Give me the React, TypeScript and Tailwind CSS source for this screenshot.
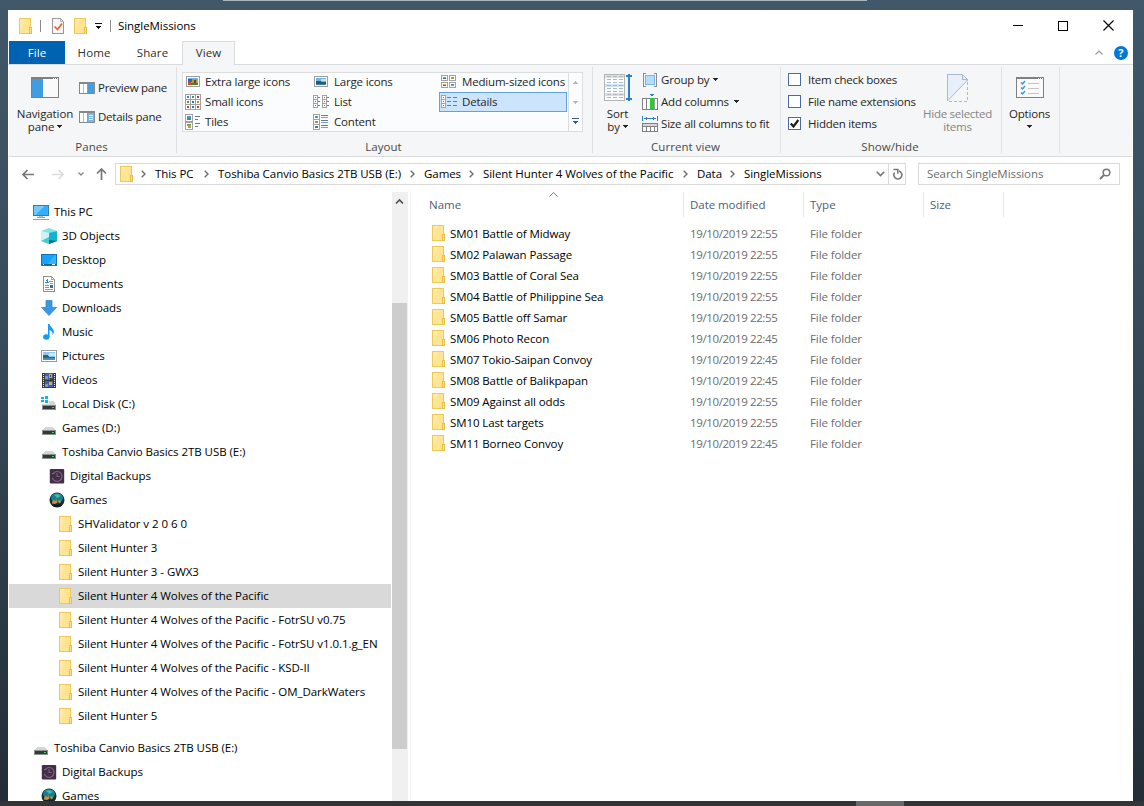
import { useState } from 'react';
import type { ReactNode } from 'react';

type IconName =
  | 'pc' | 'cube' | 'desktop' | 'documents' | 'downloads' | 'music' | 'pictures' | 'videos'
  | 'system' | 'drive' | 'backup' | 'game' | 'folder';

const TREE: { label: string; icon: IconName; level: number; gap?: boolean }[] = [
  { label: 'This PC', icon: 'pc', level: 0 },
  { label: '3D Objects', icon: 'cube', level: 1 },
  { label: 'Desktop', icon: 'desktop', level: 1 },
  { label: 'Documents', icon: 'documents', level: 1 },
  { label: 'Downloads', icon: 'downloads', level: 1 },
  { label: 'Music', icon: 'music', level: 1 },
  { label: 'Pictures', icon: 'pictures', level: 1 },
  { label: 'Videos', icon: 'videos', level: 1 },
  { label: 'Local Disk (C:)', icon: 'system', level: 1 },
  { label: 'Games (D:)', icon: 'drive', level: 1 },
  { label: 'Toshiba Canvio Basics 2TB USB (E:)', icon: 'drive', level: 1 },
  { label: 'Digital Backups', icon: 'backup', level: 2 },
  { label: 'Games', icon: 'game', level: 2 },
  { label: 'SHValidator v 2 0 6 0', icon: 'folder', level: 3 },
  { label: 'Silent Hunter 3', icon: 'folder', level: 3 },
  { label: 'Silent Hunter 3 - GWX3', icon: 'folder', level: 3 },
  { label: 'Silent Hunter 4 Wolves of the Pacific', icon: 'folder', level: 3 },
  { label: 'Silent Hunter 4 Wolves of the Pacific - FotrSU v0.75', icon: 'folder', level: 3 },
  { label: 'Silent Hunter 4 Wolves of the Pacific - FotrSU v1.0.1.g_EN', icon: 'folder', level: 3 },
  { label: 'Silent Hunter 4 Wolves of the Pacific - KSD-II', icon: 'folder', level: 3 },
  { label: 'Silent Hunter 4 Wolves of the Pacific - OM_DarkWaters', icon: 'folder', level: 3 },
  { label: 'Silent Hunter 5', icon: 'folder', level: 3 },
  { label: 'Toshiba Canvio Basics 2TB USB (E:)', icon: 'drive', level: 0, gap: true },
  { label: 'Digital Backups', icon: 'backup', level: 1 },
  { label: 'Games', icon: 'game', level: 1 },
];

const INDENT = ['pl-[24px]', 'pl-[32px]', 'pl-[40px]', 'pl-[48px]'];

const FILES = [
  { name: 'SM01 Battle of Midway', date: '19/10/2019 22:55' },
  { name: 'SM02 Palawan Passage', date: '19/10/2019 22:55' },
  { name: 'SM03 Battle of Coral Sea', date: '19/10/2019 22:55' },
  { name: 'SM04 Battle of Philippine Sea', date: '19/10/2019 22:55' },
  { name: 'SM05 Battle off Samar', date: '19/10/2019 22:55' },
  { name: 'SM06 Photo Recon', date: '19/10/2019 22:45' },
  { name: 'SM07 Tokio-Saipan Convoy', date: '19/10/2019 22:45' },
  { name: 'SM08 Battle of Balikpapan', date: '19/10/2019 22:45' },
  { name: 'SM09 Against all odds', date: '19/10/2019 22:55' },
  { name: 'SM10 Last targets', date: '19/10/2019 22:55' },
  { name: 'SM11 Borneo Convoy', date: '19/10/2019 22:45' },
];

const CRUMBS = [
  { label: 'This PC', width: 'w-[63px]' },
  { label: 'Toshiba Canvio Basics 2TB USB (E:)', width: 'w-[206px]' },
  { label: 'Games', width: 'w-[59px]' },
  { label: 'Silent Hunter 4 Wolves of the Pacific', width: 'w-[214px]' },
  { label: 'Data', width: 'w-[47px]' },
  { label: 'SingleMissions', width: 'w-[100px]' },
];

function Svg({ w = 16, h = 16, className = '', crisp = true, children }: { w?: number; h?: number; className?: string; crisp?: boolean; children: ReactNode }) {
  return (
    <svg width={w} height={h} viewBox={`0 0 ${w} ${h}`} shapeRendering={crisp ? 'crispEdges' : 'auto'} fill="none" className={`shrink-0 ${className}`}>
      {children}
    </svg>
  );
}

function Folder({ className = '' }: { className?: string }) {
  return (
    <Svg w={14} className={className}>
      <path d="M.5.5h11v15H.5z" fill="#ffe493" stroke="#efc958" />
      <path d="M1 1h5L1 14z" fill="#ffe9a6" />
      <path d="M10.5 9.5h2v6h-2z" fill="#ffe493" stroke="#e8bd48" />
    </Svg>
  );
}

function Drive({ system = false }: { system?: boolean }) {
  return (
    <Svg>
      {system && <path d="M0 1h3v2H0zM4 0h3v3H4zM0 4h3v2H0zM4 4h3v3H4z" fill="#0bb4f0" />}
      <path d={system ? 'M8 5h5l2 4H1V8h7z' : 'M4 7h8l3 4H1z'} fill="#d4d5d6" />
      <g transform={system ? 'translate(0 -1)' : undefined}>
        <path d="M1 10h14v5H1z" fill="#8e9192" />
        <path d="M2 11h12v3H2z" fill="#343838" />
        <path d="M11 12h2v1h-2z" fill="#2be04c" />
      </g>
    </Svg>
  );
}

function TreeIcon({ name }: { name: IconName }) {
  switch (name) {
    case 'pc':
      return (
        <Svg>
          <path d="M.5 1.5h15v10H.5z" fill="#35b0f8" stroke="#2c7fb5" />
          <path d="M1 2h10L3 11H1z" fill="#75cafa" />
          <path d="M6 12h4v1H6z" fill="#b8c3cc" />
          <path d="M4 13h8v1H4zM0 15h16v1H0z" fill="#8fa2b4" />
        </Svg>
      );
    case 'cube':
      return (
        <Svg crisp={false}>
          <path d="M0 3l8-3 8 3-8 3z" fill="#7fe3e8" />
          <path d="M0 3l8 2v11l-8-3z" fill="#cdf3f3" />
          <path d="M0 13l8-4v7z" fill="#43cbd3" />
          <path d="M8 5l8-2v10l-8 3z" fill="#14b2cf" />
          <path d="M8 12l8 1-8 3z" fill="#056b90" />
        </Svg>
      );
    case 'desktop':
      return (
        <Svg>
          <path d="M.5 2.5h15v11H.5z" fill="#17a3f9" stroke="#1277b4" />
          <path d="M7 12L14 3h1v9z" fill="#37b3fc" />
          <path d="M1 12h14v1H1z" fill="#0b65a4" />
          <path d="M2 12h1v1H2zM11 12h3v1h-3z" fill="#fff" />
        </Svg>
      );
    case 'documents':
      return (
        <Svg>
          <path d="M2.5.5h8l3 3v12h-11z" fill="#fff" stroke="#909090" />
          <path d="M10.5.5v3h3" stroke="#a5a5a5" />
          <path d="M6 3h1v4H6zM5 4h1v1H5zM4 6h4v1H4z" fill="#2f8ccc" />
          <path d="M8 5.5h4M9 7.5h3M4 9.5h4M4 11.5h4" stroke="#4a9fd3" />
          <path d="M9 9h3v3H9z" fill="#3d6f91" />
          <path d="M4 13.5h8" stroke="#999" />
        </Svg>
      );
    case 'downloads':
      return (
        <Svg crisp={false}>
          <path d="M5 .5h6v7h4.5L8 15.5.5 7.5H5z" fill="#3997e8" stroke="#2a82cc" strokeWidth=".7" />
        </Svg>
      );
    case 'music':
      return (
        <Svg crisp={false}>
          <ellipse cx="5.3" cy="13" rx="3.2" ry="2.7" fill="#129cf0" />
          <path d="M7 0h1.500c.3 2.800 4.800 4.200 4.300 8.500-.2 1-.7 1.600-1.300 2.500.4-3-.8-4.300-3-5v7H7z" fill="#129cf0" />
        </Svg>
      );
    case 'pictures':
      return (
        <Svg>
          <path d="M.5 2.5h15v11H.5z" fill="#fff" stroke="#9a9a9a" />
          <path d="M2 4h12v8H2z" fill="#8ecaf2" />
          <path d="M8 5h6v3H8z" fill="#c9e7f8" />
          <path d="M2 7h4l3 2h5v1H2z" fill="#2f6b56" />
          <path d="M2 10h12v2H2z" fill="#4f8db8" />
        </Svg>
      );
    case 'videos':
      return (
        <Svg>
          <path d="M1 1h14v15H1z" fill="#3a3a3a" />
          <path d="M2.500 2v14M13.500 2v14" stroke="#e8e8e8" strokeDasharray="1 1" />
          <path d="M4 1h8v7H4zM4 9h8v6H4z" fill="#3f62b8" />
          <path d="M8 2h3v4H8zM8 10h3v3H8z" fill="#d3b235" />
          <path d="M4 4h3v3H4zM4 12h3v3H4z" fill="#7698d9" />
          <path d="M9 3h1v2H9zM9 6h3v2H9z" fill="#504124" />
        </Svg>
      );
    case 'system':
      return <Drive system />;
    case 'drive':
      return <Drive />;
    case 'backup':
      return (
        <Svg crisp={false}>
          <rect x=".8" y="1" width="14.4" height="14.4" rx="1" fill="#452f48" />
          <path d="M4 5.500A5 5 0 1 1 3.300 10" stroke="#7c6680" strokeWidth="1.1" />
          <path d="M8 5v3.500h2.500M3 5.500h2.500" stroke="#7c6680" />
        </Svg>
      );
    case 'game':
      return (
        <Svg crisp={false}>
          <circle cx="8" cy="8" r="7.5" fill="#172f38" />
          <ellipse cx="8" cy="6" rx="6" ry="4.8" fill="#1b7f8b" />
          <path d="M5 2.500c2-1 5-.6 7 1.500L8 6z" fill="#45b5ae" />
          <path d="M3 10l1.500-2 2 1 1-2 .5 4-2 1-3-.5zM9 9l2-1 1 2-1.500 1.500z" fill="#d78a2e" />
          <path d="M3 12.500h10l-2 2.500H5z" fill="#111a20" />
        </Svg>
      );
    default:
      return <Folder className="ml-[2px]" />;
  }
}

function Caret({ className = '' }: { className?: string }) {
  return (
    <Svg w={5} h={3} className={`inline-block align-middle ${className}`}>
      <path d="M0 0h5v1H0zM1 1h3v1H1zM2 2h1v1H2z" fill="#262626" />
    </Svg>
  );
}

function Crumb() {
  return (
    <Svg w={5} h={8} crisp={false}>
      <path d="M.7.7L4 4 .7 7.3" stroke="#6e6e6e" strokeWidth="1.4" />
    </Svg>
  );
}

function Group({ label, width, children }: { label: string; width: string; children: ReactNode }) {
  return (
    <section className={`mt-[2px] flex h-[86px] shrink-0 flex-col border-r border-[#e0e1e3] ${width}`}>
      <div className="flex h-[73px] shrink-0">{children}</div>
      <div className="h-[13px] pr-[2px] text-center leading-[13px] tracking-[0.05px] text-[#4a4a4a]">{label}</div>
    </section>
  );
}

function PaneIcon({ details = false }: { details?: boolean }) {
  return (
    <Svg h={12}>
      <path d="M.5.5h15v11H.5z" fill="#fff" stroke="#85888c" />
      <path d="M0 0h16v2H0z" fill="#85888c" />
      <path d="M4.500 2v9" stroke="#bcbec0" />
      <path d="M9 2h6v9H9z" fill={details ? '#74b6e8' : '#439de0'} />
      <path d="M8.500 2v9" stroke="#999" />
      {details && <path d="M10 4.500h4M10 6.500h4M10 8.500h4" stroke="#eaf6ff" />}
    </Svg>
  );
}

function Thumb({ x, y, a, b }: { x: number; y: number; a: string; b: string }) {
  return (
    <g transform={`translate(${x} ${y})`}>
      <path d="M.5.5h6v5h-6z" fill="#fff" stroke="#a2a2a2" />
      <path d="M2 2h3v1H2z" fill={a} />
      <path d="M2 3h3v1H2z" fill={b} />
    </g>
  );
}

function LayoutIcon({ name }: { name: string }) {
  if (name === 'Extra large icons' || name === 'Large icons') {
    const large = name === 'Large icons';
    return (
      <Svg>
        <path d="M1.500 2.500h13v10h-13z" fill="#fff" stroke="#9d9d9d" />
        <path d="M3 4h10v7H3z" fill="#6eb5ee" />
        {large ? (
          <>
            <path d="M8 5h5v2H8z" fill="#c5e2f4" />
            <path d="M3 7h3l3 1h4v2H3z" fill="#2d5e57" />
            <path d="M3 10h10v1H3z" fill="#3d7db5" />
          </>
        ) : (
          <>
            <path d="M3 5h4v3H3z" fill="#2a67c8" />
            <path d="M7 5h5v5H7z" fill="#b69a2d" />
            <path d="M9 6h2v3H9z" fill="#5d4a2c" />
            <path d="M3 8h3v3H3z" fill="#cc4c31" />
            <path d="M6 9h7v2H6z" fill="#3f7e3c" />
          </>
        )}
      </Svg>
    );
  }
  if (name === 'Small icons') {
    return (
      <Svg>
        <path d="M.5.5h15v15H.5zM5.500 0v16M10.500 0v16M0 5.500h16M0 10.500h16" stroke="#a2a2a2" fill="#fff" />
        <path d="M2 2h2v2H2z" fill="#3f84c4" /><path d="M7 2h2v2H7z" fill="#57895a" /><path d="M12 2h2v2h-2z" fill="#b8442f" />
        <path d="M2 7h2v2H2z" fill="#5a8c46" /><path d="M7 7h2v2H7z" fill="#3471b4" /><path d="M12 7h2v2h-2z" fill="#bd8b2f" />
        <path d="M2 12h2v2H2z" fill="#b8442f" /><path d="M7 12h2v2H7z" fill="#3471b4" /><path d="M12 12h2v2h-2z" fill="#b8442f" />
      </Svg>
    );
  }
  if (name === 'Medium-sized icons') {
    return (
      <Svg>
        <Thumb x={0} y={1} a="#6bacdf" b="#346b60" />
        <Thumb x={8} y={1} a="#5ca2dd" b="#b59a37" />
        <Thumb x={0} y={8} a="#e0a12e" b="#c43e26" />
        <Thumb x={8} y={8} a="#3d84c5" b="#b6a03c" />
      </Svg>
    );
  }
  if (name === 'List') {
    return (
      <Svg>
        {[0, 9].map((x) => (
          <g key={x} transform={`translate(${x} 1)`}>
            <path d="M.5.5h4v12h-4zM0 4.500h5M0 8.500h5" stroke="#a2a2a2" fill="#fff" />
            <path d="M2 2h1v1H2z" fill="#357fc5" /><path d="M2 6h1v1H2z" fill="#357fc5" /><path d="M2 10h1v1H2z" fill="#c4442d" />
            <path d="M5 2.500h2M5 6.500h2M5 10.500h2" stroke="#777" />
          </g>
        ))}
      </Svg>
    );
  }
  if (name === 'Details') {
    return (
      <Svg w={17}>
        <path d="M.5 1.500h4v12h-4zM0 5.500h5M0 9.500h5" stroke="#a2a2a2" fill="#fff" />
        <path d="M2 3h1v1H2z" fill="#357fc5" /><path d="M2 7h1v1H2z" fill="#357fc5" /><path d="M2 11h1v1H2z" fill="#c4442d" />
        <path d="M6 3.500h4M12 3.500h4M6 7.500h4M12 7.500h4M6 11.500h4M12 11.500h4" stroke="#737b86" />
      </Svg>
    );
  }
  if (name === 'Content') {
    return (
      <Svg>
        <path d="M.5.5h6v15h-6zM0 5.500h7M0 10.500h7" stroke="#a2a2a2" fill="#fff" />
        <path d="M2 2h3v2H2z" fill="#5a93b5" /><path d="M2 7h3v2H2z" fill="#b28b38" /><path d="M2 12h3v2H2z" fill="#3e78a5" />
        <path d="M8 1.500h7M8 6.500h7M8 11.500h7" stroke="#777" />
        <path d="M8 3.500h7M8 8.500h7M8 13.500h7" stroke="#6ba3e8" />
      </Svg>
    );
  }
  return (
    <Svg>
      <path d="M.5.5h7v7h-7zM.5 8.500h7v7h-7z" stroke="#a2a2a2" fill="#fff" />
      <path d="M2 2h4v2H2z" fill="#4b96d8" /><path d="M2 4h4v2H2z" fill="#4d8580" />
      <path d="M2 10h4v2H2z" fill="#6aa14e" /><path d="M3 11h3v3H3z" fill="#c29a4e" />
      <path d="M10 2.500h5M10 5.500h3M10 9.500h5M10 12.500h3" stroke="#777" />
    </Svg>
  );
}

const LAYOUTS = [
  ['Extra large icons', 'Small icons', 'Tiles'],
  ['Large icons', 'List', 'Content'],
  ['Medium-sized icons', 'Details'],
];
const LAYOUT_WIDTHS = ['w-[128px]', 'w-[128px]', 'w-[129px]'];

function TitleBar() {
  return (
    <header className="flex h-[31px] shrink-0 items-center pl-[11px]">
      <Folder />
      <div className="ml-[7px] h-[12px] w-px bg-[#8b8b8b]" />
      <Svg w={12} className="ml-[11px] mt-px">
        <path d="M.5.5h8l3 3v12H.5z" fill="#f7f7f7" stroke="#999" />
        <path d="M8.500.5v3h3" stroke="#b5b5b5" />
        <path d="M2.500 8.500l3 3 4.500-6" stroke="#eb6029" strokeWidth="1.7" shapeRendering="auto" />
      </Svg>
      <Folder className="ml-[10px] mt-px" />
      <Svg w={7} h={6} className="ml-[7px] mt-px">
        <path d="M0 0h7v1H0zM1 3h5v1H1zM2 4h3v1H2zM3 5h1v1H3z" fill="#111" />
      </Svg>
      <div className="ml-[8px] h-[12px] w-px bg-[#8b8b8b]" />
      <span className="ml-[7px] tracking-[-0.05px] text-black">SingleMissions</span>
      <div className="ml-auto mr-[19px] flex items-center gap-[35px]">
        <Svg w={10} h={11}><path d="M0 5h10v1H0z" fill="#000" /></Svg>
        <Svg w={10} h={10}><path d="M.5.5h9v9h-9z" stroke="#000" /></Svg>
        <Svg w={11} h={11} crisp={false}><path d="M.5.5l10 10M10.500.5l-10 10" stroke="#000" strokeWidth="1.1" /></Svg>
      </div>
    </header>
  );
}

function Tabs() {
  return (
    <nav className="flex h-[24px] shrink-0 border-b border-[#dadbdc] tracking-[0.1px] text-[#303030]">
      <div className="ml-px w-[56px] bg-[#0063b1] text-center leading-[24px] text-white">File</div>
      <div className="w-[58px] text-center leading-[24px]">Home</div>
      <div className="w-[59px] text-center leading-[24px]">Share</div>
      <div className="h-[24px] w-[53px] border border-b-0 border-[#dadbdc] bg-[#f5f6f7] text-center leading-[22px]">View</div>
      <div className="ml-auto mr-[5px] flex items-center gap-[11px]">
        <Svg w={8} h={5} crisp={false}><path d="M.5 4.500L4 1l3.500 3.500" stroke="#999" strokeWidth="1.2" /></Svg>
        <div className="flex size-[14px] items-center justify-center rounded-full bg-[#0078d7] text-[11px] font-bold leading-none text-white">?</div>
      </div>
    </nav>
  );
}

function CheckItem({ label, initial = false }: { label: string; initial?: boolean }) {
  const [checked, setChecked] = useState(initial);
  return (
    <button type="button" onClick={() => setChecked(!checked)} className="flex h-[22px] items-center">
      <span className="-mt-px flex size-[13px] items-center justify-center border border-[#4a6ba0] bg-white">
        {checked && <Svg w={11} h={11} crisp={false}><path d="M1.800 5.500l2.700 3L9.300 2" stroke="#1c1c1c" strokeWidth="2.2" /></Svg>}
      </span>
      <span className="ml-[7px]">{label}</span>
    </button>
  );
}

function Ribbon() {
  const [layout, setLayout] = useState('Details');
  return (
    <div className="mx-px flex h-[92px] shrink-0 whitespace-nowrap border-b border-[#dadbdc] bg-[#f5f6f7] tracking-[-0.18px] text-[#262626]">
      <Group label="Panes" width="w-[168px]">
        <div className="ml-[4px] flex w-[64px] flex-col items-center pt-[10px] text-center leading-[13px] tracking-[-0.1px]">
          <Svg w={28} h={21}>
            <path d="M.5.5h27v20H.5z" fill="#fafafa" stroke="#808080" />
            <path d="M0 0h28v2H0z" fill="#808080" />
            <path d="M22 1h1v1h-1zM24 1h1v1h-1zM26 1h1v1h-1z" fill="#fff" />
            <path d="M1 2h11v18H1z" fill="#429ce0" />
          </Svg>
          <span className="mt-[9px]">Navigation<br />pane<Caret className="-mt-[3px] ml-[3px]" /></span>
        </div>
        <div className="ml-[2px] flex flex-col pt-[6px] tracking-[-0.25px]">
          <div className="flex h-[29px] items-center gap-[3px]"><PaneIcon />Preview pane</div>
          <div className="flex h-[29px] items-center gap-[3px]"><PaneIcon details />Details pane</div>
        </div>
      </Group>

      <Group label="Layout" width="w-[416px]">
        <div className="ml-[5px] mt-[5px] flex h-[60px] w-[401px] border border-[#dcdddf] bg-[#fbfcfd]">
          {LAYOUTS.map((column, i) => (
            <div key={i} className={`-mt-px flex h-[60px] shrink-0 flex-col ${LAYOUT_WIDTHS[i]}`}>
              {column.map((name) => (
                <button
                  key={name}
                  type="button"
                  onClick={() => setLayout(name)}
                  className={`flex h-[20px] shrink-0 items-center border pl-px text-left ${layout === name ? 'mr-px border-[#62a2e4] bg-[#cce4fc]' : 'border-transparent'}`}
                >
                  <LayoutIcon name={name} />
                  <span className={i === 1 || name === 'Medium-sized icons' ? 'ml-[5px]' : 'ml-[4px]'}>{name}</span>
                </button>
              ))}
            </div>
          ))}
          <div className="flex flex-1 flex-col items-center justify-between border-l border-[#dcdddf] pb-[7px] pt-[8px]">
            <Svg w={5} h={3}><path d="M2 0h1v1H2zM1 1h3v1H1zM0 2h5v1H0z" fill="#b3bac4" /></Svg>
            <Svg w={5} h={3} className="mt-[3px]"><path d="M0 0h5v1H0zM1 1h3v1H1zM2 2h1v1H2z" fill="#b3bac4" /></Svg>
            <Svg w={7} h={6}><path d="M0 0h7v1H0zM1 3h5v1H1zM2 4h3v1H2zM3 5h1v1H3z" fill="#40587c" /></Svg>
          </div>
        </div>
      </Group>

      <Group label="Current view" width="w-[188px]">
        <div className="ml-[9px] flex w-[31px] flex-col items-center pt-[7px] text-center leading-[13px]">
          <Svg w={30} h={28}>
            <path d="M1.500.5h20v26h-20z" fill="#fdfdfd" stroke="#b4b4b4" />
            <path d="M2 1h19v3H2zM2 10h19v3H2zM2 19h19v3H2z" fill="#cbe5f6" />
            <path d="M4 2.500h16M4 5.500h16M4 8.500h16M4 11.500h16M4 14.500h16M4 17.500h16M4 20.500h16M4 23.500h16" stroke="#b3b8bb" strokeDasharray="4 2" />
            <path d="M26 2v23" stroke="#2a7fc5" strokeWidth="2" />
            <path d="M25 0h2v1h2v2h-6V1h2zM23 24h6v2h-2v1h-2v-1h-2z" fill="#2a7fc5" />
          </Svg>
          <span className="mt-[5px]">Sort<br />by<Caret className="-mt-[3px] ml-[3px]" /></span>
        </div>
        <div className="ml-[9px] flex flex-col pt-[2px]">
          <div className="flex h-[22px] items-center">
            <Svg>
              <path d="M4 1.500H1.500v13H4M12 1.500h2.500v13H12" stroke="#8b8b8b" />
              <path d="M3.500 3.500h9v9h-9z" fill="#b4ddfb" stroke="#79b6e8" />
            </Svg>
            <span className="ml-[3px]">Group by</span><Caret className="-mt-px ml-[4px]" />
          </div>
          <div className="flex h-[22px] items-center">
            <Svg>
              <path d="M.5 4.500h15v11H.5z" fill="#fff" stroke="#808080" />
              <path d="M4.500 4v12M8 4v12" stroke="#808080" />
              <path d="M8 4h4v11H8z" fill="#25cf2d" />
              <path d="M12.500 4v12" stroke="#999" />
              <path d="M8 0h4v1H8zM9 1h2v1H9z" fill="#2a7fc5" />
            </Svg>
            <span className="ml-[3px]">Add columns</span><Caret className="-mt-px ml-[5px]" />
          </div>
          <div className="flex h-[22px] items-center">
            <Svg>
              <path d="M.5 0v5M15.500 0v5M2 2.500h12M4.500 1v3M11.500 1v3M3.500 2v1M12.500 2v1" stroke="#2a7fc5" />
              <path d="M.5 7.500h15v8H.5zM4.500 10v6M8.500 10v6M12.500 10v6" fill="#fff" stroke="#808080" />
              <path d="M1 8h14v2H1z" fill="#d7d7d7" />
              <path d="M0 10.500h16" stroke="#808080" />
            </Svg>
            <span className="ml-[3px]">Size all columns to fit</span>
          </div>
        </div>
      </Group>

      <Group label="Show/hide" width="w-[221px]">
        <div className="ml-[7px] flex w-[133px] flex-col pt-[2px] tracking-[-0.24px]">
          <CheckItem label="Item check boxes" />
          <CheckItem label="File name extensions" />
          <CheckItem label="Hidden items" initial />
        </div>
        <div className="flex w-[73px] flex-col items-center pt-[7px] text-center leading-[13px] text-[#848484]">
          <Svg w={21} h={28}>
            <path d="M.5.5h15l5 5L.5 27z" fill="#e6effa" />
            <path d="M.5 27V.5h15l5 5v1M15.500.5v5h5" stroke="#a8bad2" />
            <path d="M.5 27l20-21" stroke="#a8bad2" shapeRendering="auto" />
            <path d="M20.500 8v19.500H0" stroke="#a8bad2" strokeDasharray="3 2" />
          </Svg>
          <span className="mt-[5px] tracking-[-0.26px]">Hide selected<br />items</span>
        </div>
      </Group>

      <section className="mt-[2px] flex h-[86px] w-[58px] shrink-0 flex-col items-center border-r border-[#e0e1e3] pr-[2px] pt-[10px] leading-[13px]">
        <Svg w={28} h={21}>
          <path d="M.5.5h27v20H.5z" fill="#fafafa" stroke="#808080" />
          <path d="M0 0h28v2H0z" fill="#808080" />
          <path d="M22 1h1v1h-1zM24 1h1v1h-1zM26 1h1v1h-1z" fill="#fff" />
          <path d="M12 6.500h11M12 11.500h11M12 16.500h11" stroke="#c6c6c6" />
          <path d="M5 5.500l1.500 1.500L9 4M5 10.500l1.500 1.500L9 9M5 15.500l1.500 1.500L9 14" stroke="#3a95df" strokeWidth="1.5" shapeRendering="auto" />
        </Svg>
        <span className="mt-[9px]">Options</span>
        <Caret className="mt-[5px]" />
      </section>
    </div>
  );
}

function AddressBar() {
  return (
    <div className="flex h-[35px] shrink-0 items-start pt-[6px] text-black">
      <div className="flex h-[22px] w-[107px] items-center pl-[14px]">
        <Svg w={12} h={11} crisp={false}><path d="M12 5.500H1M5.500 1L1 5.500 5.500 10" stroke="#777" strokeWidth="1.7" /></Svg>
        <Svg w={12} h={11} crisp={false} className="ml-[18px]"><path d="M0 5.500h11M6.500 1L11 5.500 6.500 10" stroke="#dcdcdc" strokeWidth="1.7" /></Svg>
        <Svg w={6} h={4} crisp={false} className="ml-[14px]"><path d="M.5.5L3 3 5.500.5" stroke="#888" strokeWidth="1.3" /></Svg>
        <Svg w={11} h={12} crisp={false} className="ml-[12px]"><path d="M5.500 12V1M1 5.500L5.500 1 10 5.500" stroke="#777" strokeWidth="1.7" /></Svg>
      </div>
      <div className="flex h-[22px] w-[791px] items-center border border-[#d9d9d9] pl-[4px]">
        <Folder className="-mt-px" />
        <div className="ml-[7px] flex items-center whitespace-nowrap tracking-[-0.06px]">
          {CRUMBS.map((crumb) => (
            <div key={crumb.label} className={`flex items-center ${crumb.width}`}>
              <Crumb />
              <span className="ml-[9px]">{crumb.label}</span>
            </div>
          ))}
        </div>
        <div className="ml-auto flex h-full items-center">
          <Svg w={9} h={6} crisp={false} className="mr-[3px]"><path d="M.7.7l3.800 3.800L8.300.7" stroke="#777" strokeWidth="1.6" /></Svg>
          <div className="flex h-full w-[17px] items-center justify-center border-l border-[#d9d9d9]">
            <Svg w={11} h={12} crisp={false}>
              <path d="M2.600 4.600A4 4 0 1 0 7 3.100" stroke="#777" strokeWidth="1.6" />
              <path d="M1.500 1.400h4.300v4.300" stroke="#777" strokeWidth="1.5" />
            </Svg>
          </div>
        </div>
      </div>
      <div className="ml-[12px] flex h-[22px] w-[202px] items-center border border-[#d9d9d9] pl-[8px] pr-[8px] text-[#6d6d6d]">
        <span className="tracking-[-0.07px]">Search SingleMissions</span>
        <Svg w={12} h={12} crisp={false} className="ml-auto">
          <circle cx="7.5" cy="4.5" r="3.3" stroke="#777" strokeWidth="1.5" />
          <path d="M5 7L1 11" stroke="#777" strokeWidth="2" />
        </Svg>
      </div>
    </div>
  );
}

function Tree() {
  const [selected, setSelected] = useState(16);
  return (
    <div className="ml-px flex w-[383px] shrink-0 flex-col overflow-hidden whitespace-nowrap pt-[8px] tracking-[-0.05px] text-black">
      {TREE.map((item, i) => (
        <button
          key={i}
          type="button"
          onClick={() => setSelected(i)}
          className={`mr-px flex h-[24px] shrink-0 items-center text-left ${INDENT[item.level]} ${item.gap ? 'mt-[8px]' : ''} ${selected === i ? 'bg-[#d9d9d9]' : ''}`}
        >
          <TreeIcon name={item.icon} />
          <span className="ml-[5px] leading-none">{item.label}</span>
        </button>
      ))}
    </div>
  );
}

function FileList() {
  return (
    <div className="flex-1 text-black">
      <div className="flex h-[25px] text-[#4c607a]">
        <div className="relative w-[273px] border-r border-[#e5e5e5] pl-[18px] leading-[26px]">
          Name
          <Svg w={9} h={5} crisp={false} className="absolute left-[138px] top-0"><path d="M.5 4.500l4-4 4 4" stroke="#777" /></Svg>
        </div>
        <div className="w-[120px] border-r border-[#e5e5e5] pl-[6px] leading-[26px] tracking-[-0.05px]">Date modified</div>
        <div className="w-[120px] border-r border-[#e5e5e5] pl-[6px] leading-[26px]">Type</div>
        <div className="w-[80px] border-r border-[#e5e5e5] pl-[6px] leading-[26px]">Size</div>
      </div>
      <div className="mt-[6px] flex flex-col">
        {FILES.map((file) => (
          <div key={file.name} className="flex h-[21px] items-center whitespace-nowrap pl-[21px]">
            <Folder className="-mt-px" />
            <span className="ml-[4px] w-[240px] tracking-[-0.1px]">{file.name}</span>
            <span className="w-[120px] tracking-[-0.37px] text-[#6d6d6d]">{file.date}</span>
            <span className="tracking-[-0.1px] text-[#6d6d6d]">File folder</span>
          </div>
        ))}
      </div>
    </div>
  );
}

export default function App() {
  return (
    <div className="flex h-[806px] w-[1144px] flex-col overflow-hidden bg-linear-to-b from-[#40586a] via-[#354755] to-[#222d37] font-['Open_Sans','Noto_Sans',sans-serif] text-[11.5px]">
      <div className="ml-[223px] h-px w-[644px] shrink-0 bg-[#a9b9bd]" />
      <main className="ml-[8px] mt-[9px] flex h-[791px] w-[1125px] shrink-0 flex-col bg-white">
        <TitleBar />
        <Tabs />
        <Ribbon />
        <AddressBar />
        <div className="flex h-[609px] shrink-0">
          <Tree />
          <div className="flex w-[16px] shrink-0 flex-col bg-[#f0f0f0]">
            <Svg w={9} h={7} crisp={false} className="ml-[3px] mt-[6px]"><path d="M1 5.500L4.500 2 8 5.500" stroke="#505050" strokeWidth="1.7" /></Svg>
            <div className="mt-[98px] h-[446px] w-[15px] bg-[#cdcdcd]" />
          </div>
          <div className="ml-[2px] w-px shrink-0 bg-[#f5f5f5]" />
          <FileList />
        </div>
      </main>
      <footer className="flex h-[5px] shrink-0 bg-[#333435]">
        <div className="ml-[856px] w-[48px] bg-[#686868]" />
      </footer>
    </div>
  );
}
